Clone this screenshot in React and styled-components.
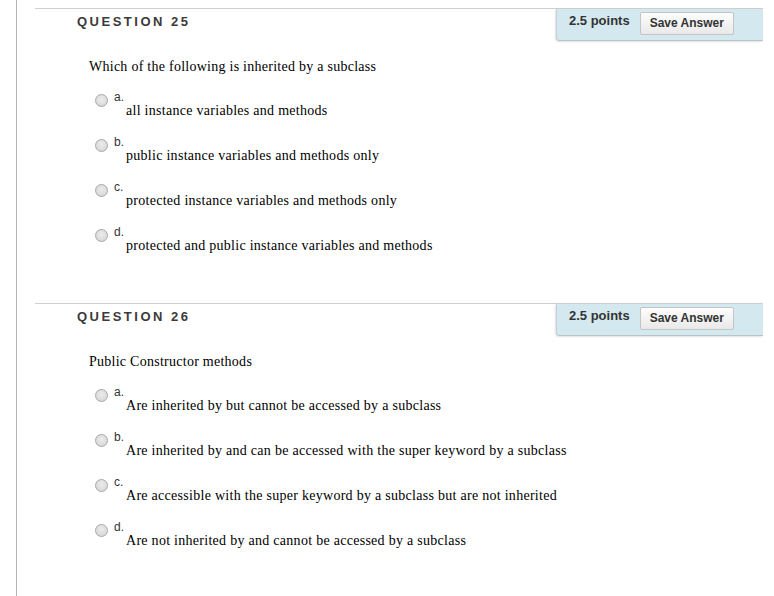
import React from "react";
import styled, { createGlobalStyle } from "styled-components";

const Global = createGlobalStyle`
  html, body { margin: 0; padding: 0; background: #fff; }
  body { font-family: "Liberation Sans", Arial, sans-serif; }
`;

const Page = styled.div`
  display: flex;
  min-height: 596px;
`;

const Gutter = styled.div`
  width: 16px;
  flex: none;
  border-right: 1px solid #b4b4b4;
`;

const Main = styled.main`
  padding: 8px 0 0 18px;
  width: 728px;
`;

const Block = styled.section`
  border-top: 1px solid #cfcfcf;
  padding-bottom: 49px;
`;

const Header = styled.div`
  display: flex;
  justify-content: space-between;
  align-items: flex-start;
  height: 32px;
`;

const Title = styled.h3`
  margin: 0;
  padding: 5px 0 0 42px;
  font: bold 13px/16px "Liberation Sans", Arial, sans-serif;
  letter-spacing: 2.5px;
  color: #3a3a3a;
`;

const PointsBox = styled.div`
  box-sizing: border-box;
  width: 207px;
  height: 32px;
  display: flex;
  align-items: flex-start;
  padding-left: 12px;
  background: #d3e9ef;
  border-left: 1px solid #c3d0d4;
  border-bottom: 1px solid #b9c4c7;
  border-bottom-left-radius: 4px;
  box-shadow: -1px 1px 2px rgba(0, 0, 0, 0.12);
`;

const Points = styled.span`
  margin-top: 4px;
  font: bold 13px/16px "Liberation Sans", Arial, sans-serif;
  color: #333;
`;

const SaveButton = styled.button`
  margin: 3px 0 0 10px;
  height: 23px;
  padding: 0 9px;
  border: 1px solid #c4c4c4;
  border-radius: 2px;
  background: linear-gradient(#fdfdfd, #e9e9e9);
  font: bold 12px/21px "Liberation Sans", Arial, sans-serif;
  color: #333;
  cursor: pointer;
`;

const QuestionText = styled.p`
  margin: 17px 0 0 54px;
  font: 14px/18px "Liberation Serif", "Times New Roman", serif;
  letter-spacing: 0.26px;
  color: #000;
`;

const Options = styled.ul`
  list-style: none;
  margin: 18px 0 0 0;
  padding: 0 0 0 60px;
  display: flex;
  flex-direction: column;
  gap: 20px;
`;

const Option = styled.li`
  display: flex;
  align-items: flex-start;
`;

const Radio = styled.span`
  box-sizing: border-box;
  width: 13px;
  height: 13px;
  flex: none;
  border-radius: 50%;
  border: 1px solid #a8a8a8;
  background: radial-gradient(circle at 50% 40%, #ececec 0%, #dcdcdc 60%, #cfcfcf 100%);
`;

const OptionBody = styled.div`
  margin: -3px 0 0 6px;
`;

const Letter = styled.div`
  font: 12px/12px "Liberation Sans", Arial, sans-serif;
  color: #333;
`;

const Answer = styled.div`
  padding-left: 12px;
  font: 14px/16px "Liberation Serif", "Times New Roman", serif;
  letter-spacing: 0.28px;
  color: #000;
`;

const questions = [
  {
    n: 25,
    text: "Which of the following is inherited by a subclass",
    options: [
      "all instance variables and methods",
      "public instance variables and methods only",
      "protected instance variables and methods only",
      "protected and public instance variables and methods",
    ],
  },
  {
    n: 26,
    text: "Public Constructor methods",
    options: [
      "Are inherited by but cannot be accessed by a subclass",
      "Are inherited by and can be accessed with the super keyword by a subclass",
      "Are accessible with the super keyword by a subclass but are not inherited",
      "Are not inherited by and cannot be accessed by a subclass",
    ],
  },
];

const letters = ["a.", "b.", "c.", "d."];

export default function App() {
  return (
    <>
      <Global />
      <Page>
        <Gutter />
        <Main>
          {questions.map((q) => (
            <Block key={q.n}>
              <Header>
                <Title>QUESTION {q.n}</Title>
                <PointsBox>
                  <Points>2.5 points</Points>
                  <SaveButton>Save Answer</SaveButton>
                </PointsBox>
              </Header>
              <QuestionText>{q.text}</QuestionText>
              <Options>
                {q.options.map((o, i) => (
                  <Option key={i}>
                    <Radio />
                    <OptionBody>
                      <Letter>{letters[i]}</Letter>
                      <Answer>{o}</Answer>
                    </OptionBody>
                  </Option>
                ))}
              </Options>
            </Block>
          ))}
        </Main>
      </Page>
    </>
  );
}
